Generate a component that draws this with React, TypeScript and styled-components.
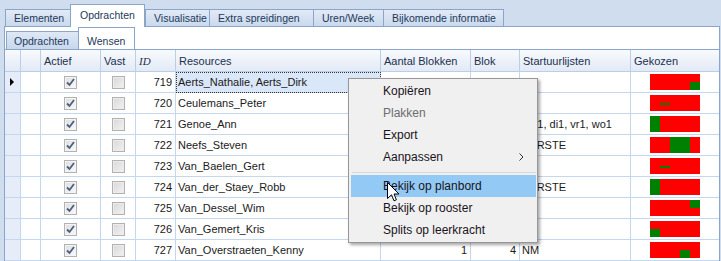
import React from 'react';
import styled, { createGlobalStyle } from 'styled-components';

const GlobalStyle = createGlobalStyle`
  html, body { margin: 0; padding: 0; background: #d0ddee; }
  body { font-family: "Liberation Sans", Arial, sans-serif; }
  * { box-sizing: border-box; }
`;

const Root = styled.div`
  position: relative;
  width: 721px;
  height: 261px;
  overflow: hidden;
  background: #d0ddee;
`;

const TopStrip = styled.div`
  display: flex;
  align-items: flex-end;
  height: 26px;
  padding-left: 5px;
`;

const TopTab = styled.div<{ $w: number; $active?: boolean; $last?: boolean }>`
  width: ${p => p.$w}px;
  height: ${p => (p.$active ? 23 : 17)}px;
  margin-bottom: ${p => (p.$active ? -1 : 0)}px;
  position: relative;
  z-index: ${p => (p.$active ? 2 : 1)};
  border-top: 1px solid #8ba5c8;
  border-left: 1px solid #8ba5c8;
  border-right: ${p => (p.$last || p.$active ? '1px solid #8ba5c8' : 'none')};
  background: ${p => (p.$active ? '#ffffff' : 'linear-gradient(#e2eaf6, #c9d9ee)')};
  color: #1e395b;
  font-size: 10.5px;
  display: flex;
  align-items: center;
  padding: ${p => (p.$active ? '0 0 2px 9px' : '0 0 0 8px')};
  white-space: nowrap;
`;

const Panel = styled.div`
  margin-left: 4px;
  width: 716px;
  height: 235px;
  background: #ffffff;
  border-left: 1px solid #8ba5c8;
  border-right: 1px solid #8ba5c8;
  border-top: 1px solid #8ba5c8;
`;

const SubStrip = styled.div`
  display: flex;
  align-items: flex-end;
  height: 22px;
  padding-left: 1px;
`;

const SubTab = styled.div<{ $w: number; $active?: boolean }>`
  width: ${p => p.$w}px;
  height: ${p => (p.$active ? 22 : 18)}px;
  border-top: 1px solid #8ba5c8;
  border-left: 1px solid #8ba5c8;
  border-right: ${p => (p.$active ? '1px solid #8ba5c8' : 'none')};
  background: ${p => (p.$active ? '#ffffff' : 'linear-gradient(#dfe8f5, #c8d8ed)')};
  color: #1e395b;
  font-size: 10.5px;
  display: flex;
  align-items: center;
  padding: ${p => (p.$active ? '4px 0 0 8px' : '0 0 0 7px')};
  white-space: nowrap;
`;

const Grid = styled.div`
  display: grid;
  grid-template-columns: 16px 20px 60px 35px 40px 205px 90px 49px 111px 88px;
  border-top: 1px solid #8ba5c8;
`;

const HeaderCell = styled.div<{ $italic?: boolean; $last?: boolean }>`
  height: 22px;
  display: flex;
  align-items: center;
  padding: 0 3px;
  font-size: 11px;
  color: #1b2f4e;
  font-style: ${p => (p.$italic ? 'italic' : 'normal')};
  font-family: ${p => (p.$italic ? '"Liberation Serif", serif' : 'inherit')};
  background: linear-gradient(#f8fafd, #e2eaf6);
  border-right: ${p => (p.$last ? 'none' : '1px solid #bccde6')};
  border-bottom: 1px solid #bccde6;
  white-space: nowrap;
`;

const Cell = styled.div<{ $align?: 'left' | 'right' | 'center'; $last?: boolean; $focused?: boolean; $indicator?: boolean }>`
  position: relative;
  height: 21px;
  display: flex;
  align-items: center;
  justify-content: ${p => (p.$align === 'right' ? 'flex-end' : p.$align === 'center' ? 'center' : 'flex-start')};
  padding: ${p => (p.$align === 'center' ? '0' : '0 3px 0 2px')};
  font-size: 11px;
  color: #1a1a1a;
  white-space: nowrap;
  overflow: hidden;
  background: ${p => (p.$focused ? '#dae7f8' : p.$indicator ? '#e6edf8' : '#ffffff')};
  border-right: ${p => (p.$last ? 'none' : '1px solid #c5d7ef')};
  border-bottom: 1px solid #c5d7ef;
  outline: ${p => (p.$focused ? '1px dotted #333' : 'none')};
  outline-offset: -1px;
`;

const Triangle = styled.span`
  width: 0;
  height: 0;
  margin-left: 3px;
  border-top: 4px solid transparent;
  border-bottom: 4px solid transparent;
  border-left: 4px solid #000;
`;

const Box = styled.span<{ $checked?: boolean }>`
  width: 13px;
  height: 13px;
  border: 1px solid #b2b2b2;
  background: ${p => (p.$checked ? 'linear-gradient(135deg, #dcdcdc, #fbfbfb)' : 'linear-gradient(135deg, #d8d8d8, #f2f2f2)')};
  box-shadow: inset 0 0 0 1px ${p => (p.$checked ? '#f4f4f4' : '#ececec')};
  display: flex;
  align-items: center;
  justify-content: center;
`;

const Menu = styled.div`
  position: absolute;
  left: 348px;
  top: 78px;
  width: 190px;
  height: 165px;
  background: #f0f0f0;
  border: 1px solid #979797;
  box-shadow: 2px 2px 3px rgba(0, 0, 0, 0.35);
  padding: 1px 1px 1px 2px;
  z-index: 10;
  display: flex;
  flex-direction: column;
`;

const MenuItem = styled.div<{ $disabled?: boolean; $hover?: boolean }>`
  height: 22px;
  display: flex;
  align-items: center;
  padding: 0 12px 0 32px;
  font-size: 12px;
  color: ${p => (p.$disabled ? '#6d6d6d' : '#1a1420')};
  background: ${p => (p.$hover ? '#93c9f5' : 'transparent')};
  white-space: nowrap;
`;

const Chevron = styled.span`
  margin-left: auto;
  display: flex;
`;

const Separator = styled.div`
  height: 1px;
  margin: 4px 0 2px 1px;
  background: #d5d5d5;
`;

const Cursor = styled.svg`
  position: absolute;
  left: 387px;
  top: 182px;
  z-index: 20;
`;

type Green = { x: number; y: number; w: number; h: number };
type Row = {
  id: number;
  name: string;
  aantal?: string;
  blok?: string;
  start?: string;
  green: Green[];
};

const rows: Row[] = [
  { id: 719, name: 'Aerts_Nathalie, Aerts_Dirk', green: [{ x: 40, y: 8, w: 10, h: 8 }] },
  { id: 720, name: 'Ceulemans_Peter', green: [{ x: 10, y: 8, w: 10, h: 2 }] },
  { id: 721, name: 'Genoe_Ann', start: 'ma1, di1, vr1, wo1', green: [{ x: 0, y: 0, w: 10, h: 16 }] },
  { id: 722, name: 'Neefs_Steven', start: 'EERSTE', green: [{ x: 20, y: 0, w: 20, h: 16 }] },
  { id: 723, name: 'Van_Baelen_Gert', green: [{ x: 10, y: 8, w: 10, h: 2 }] },
  { id: 724, name: 'Van_der_Staey_Robb', start: 'EERSTE', green: [{ x: 0, y: 0, w: 10, h: 16 }] },
  { id: 725, name: 'Van_Dessel_Wim', green: [{ x: 40, y: 0, w: 10, h: 8 }] },
  { id: 726, name: 'Van_Gemert_Kris', green: [{ x: 0, y: 8, w: 10, h: 8 }] },
  { id: 727, name: 'Van_Overstraeten_Kenny', aantal: '1', blok: '4', start: 'NM', green: [{ x: 30, y: 8, w: 10, h: 8 }] },
];

const CheckBox = ({ checked }: { checked?: boolean }) => (
  <Box $checked={checked}>
    {checked && (
      <svg width="9" height="9" viewBox="0 0 9 9">
        <path d="M1 4.5 L3.5 7 L8 1" fill="none" stroke="#4b5f80" strokeWidth="1.8" />
      </svg>
    )}
  </Box>
);

const Bar = ({ green }: { green: Green[] }) => (
  <svg width="50" height="16" viewBox="0 0 50 16">
    <rect x="0" y="0" width="50" height="16" fill="#ff0000" />
    {green.map((g, i) => (
      <rect key={i} x={g.x} y={g.y} width={g.w} height={g.h} fill="#008000" />
    ))}
  </svg>
);

const topTabs = [
  { label: 'Elementen', w: 65 },
  { label: 'Opdrachten', w: 75, active: true },
  { label: 'Visualisatie', w: 64 },
  { label: 'Extra spreidingen', w: 104 },
  { label: 'Uren/Week', w: 70 },
  { label: 'Bijkomende informatie', w: 121, last: true },
];

export default function App() {
  return (
    <Root>
      <GlobalStyle />
      <TopStrip>
        {topTabs.map(t => (
          <TopTab key={t.label} $w={t.w} $active={t.active} $last={t.last}>
            {t.label}
          </TopTab>
        ))}
      </TopStrip>
      <Panel>
        <SubStrip>
          <SubTab $w={72}>Opdrachten</SubTab>
          <SubTab $w={57} $active>
            Wensen
          </SubTab>
        </SubStrip>
        <Grid>
          <HeaderCell />
          <HeaderCell />
          <HeaderCell>Actief</HeaderCell>
          <HeaderCell>Vast</HeaderCell>
          <HeaderCell $italic>ID</HeaderCell>
          <HeaderCell>Resources</HeaderCell>
          <HeaderCell>Aantal Blokken</HeaderCell>
          <HeaderCell>Blok</HeaderCell>
          <HeaderCell>Startuurlijsten</HeaderCell>
          <HeaderCell $last>Gekozen</HeaderCell>
          {rows.map((r, i) => (
            <React.Fragment key={r.id}>
              <Cell $indicator>{i === 0 && <Triangle />}</Cell>
              <Cell />
              <Cell $align="center">
                <CheckBox checked />
              </Cell>
              <Cell $align="center">
                <CheckBox />
              </Cell>
              <Cell $align="right">{r.id}</Cell>
              <Cell $focused={i === 0}>{r.name}</Cell>
              <Cell $align="right">{r.aantal}</Cell>
              <Cell $align="right">{r.blok}</Cell>
              <Cell>{r.start}</Cell>
              <Cell $align="center" $last>
                <Bar green={r.green} />
              </Cell>
            </React.Fragment>
          ))}
        </Grid>
      </Panel>
      <Menu>
        <MenuItem>Kopiëren</MenuItem>
        <MenuItem $disabled>Plakken</MenuItem>
        <MenuItem>Export</MenuItem>
        <MenuItem>
          Aanpassen
          <Chevron>
            <svg width="5" height="8" viewBox="0 0 5 8">
              <path d="M0.5 0.5 L4 4 L0.5 7.5" fill="none" stroke="#333" strokeWidth="1" />
            </svg>
          </Chevron>
        </MenuItem>
        <Separator />
        <MenuItem $hover>Bekijk op planbord</MenuItem>
        <MenuItem>Bekijk op rooster</MenuItem>
        <MenuItem>Splits op leerkracht</MenuItem>
      </Menu>
      <Cursor width="13" height="20" viewBox="0 0 13 20">
        <path d="M0.5 0.5 V16.5 L4.5 12.8 L7 18.8 L9.4 17.8 L7 12 H12 Z" fill="#ffffff" stroke="#000000" strokeWidth="1" strokeLinejoin="miter" />
      </Cursor>
    </Root>
  );
}
